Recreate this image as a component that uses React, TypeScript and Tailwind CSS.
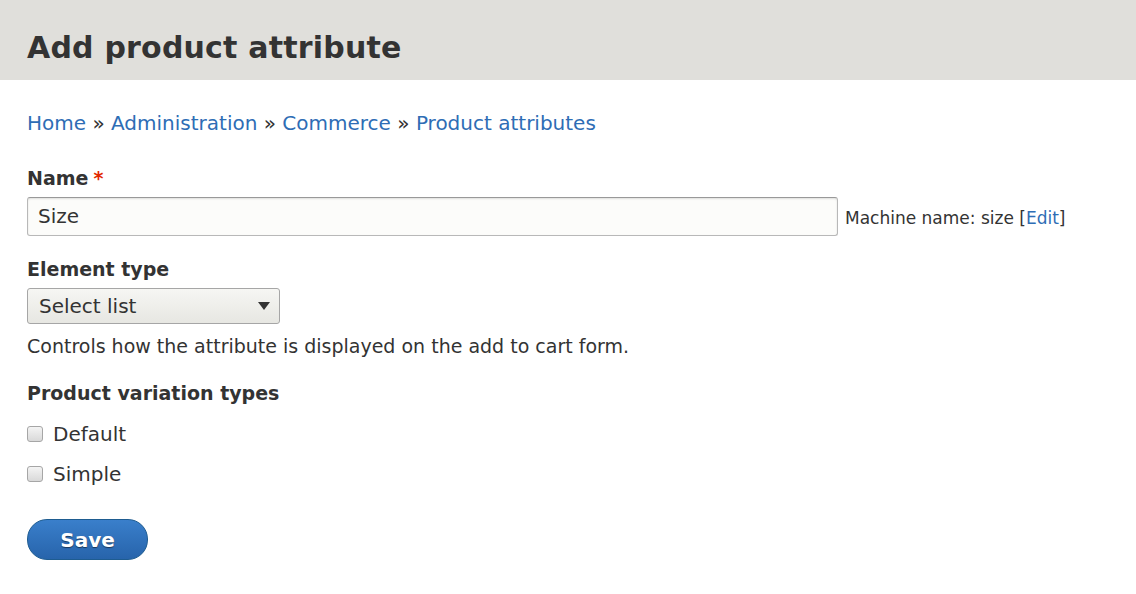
const font = { fontFamily: '"DejaVu Sans", Verdana, sans-serif' };

function Checkbox({ label }: { label: string }) {
	return (
		<label className="flex h-[40px] items-center gap-[10px]">
			<span className="h-[16px] w-[16px] rounded-[3px] border border-[#a6a6a6] bg-gradient-to-b from-[#f4f4f4] to-[#d9d9d9]" />
			<span className="text-[20px] text-[#333]">{label}</span>
		</label>
	);
}

export default function App() {
	return (
		<div className="min-h-[594px] w-[1136px] bg-white text-[#333]" style={font}>
			<header className="flex h-[80px] items-center bg-[#e0dfdb] px-[27px] pt-[14px]">
				<h1 className="text-[30px] font-bold tracking-[0.2px] text-[#333]">Add product attribute</h1>
			</header>

			<main className="px-[27px] pt-[28px]">
				<nav className="text-[20px] text-[#2e6db5]">
					<a>Home</a> <span className="text-[#333]">»</span> <a>Administration</a>{" "}
					<span className="text-[#333]">»</span> <a>Commerce</a> <span className="text-[#333]">»</span>{" "}
					<a>Product attributes</a>
				</nav>

				<div className="mt-[26px]">
					<div className="flex items-center gap-[5px] text-[19px] font-bold">
						Name <span className="text-[#e32700]">*</span>
					</div>
					<div className="mt-[4px] flex items-center gap-[7px]">
						<div className="flex h-[39px] w-[811px] items-center rounded-[3px] border border-[#b8b8b8] border-t-[#999] bg-[#fcfcfa] px-[10px] text-[20px] shadow-[inset_0_1px_2px_rgba(0,0,0,0.12)]">
							Size
						</div>
						<span className="pt-[5px] text-[17px] text-[#333]">
							Machine name: size [<a className="text-[#2e6db5]">Edit</a>]
						</span>
					</div>
				</div>

				<div className="mt-[19px]">
					<div className="text-[19px] font-bold">Element type</div>
					<div className="mt-[5px] flex h-[36px] w-[253px] items-center justify-between rounded-[3px] border border-[#a6a6a6] bg-gradient-to-b from-[#f6f6f3] to-[#e7e7e2] pl-[11px] pr-[8px] text-[20px]">
						Select list
						<svg width="14" height="10" viewBox="0 0 14 10">
							<path d="M1 1h12L7 9z" fill="#333" />
						</svg>
					</div>
					<p className="mt-[8px] text-[19px] text-[#333]">Controls how the attribute is displayed on the add to cart form.</p>
				</div>

				<div className="mt-[18px]">
					<div className="text-[19px] font-bold">Product variation types</div>
					<div className="mt-[7px]">
						<Checkbox label="Default" />
						<Checkbox label="Simple" />
					</div>
				</div>

				<button className="mt-[25px] h-[41px] w-[121px] rounded-[20px] border border-[#1e5c90] bg-gradient-to-b from-[#3a7fcb] to-[#2764ab] text-[20px] font-bold text-white [text-shadow:0_1px_1px_rgba(0,0,0,0.5)]">
					Save
				</button>
			</main>
		</div>
	);
}
